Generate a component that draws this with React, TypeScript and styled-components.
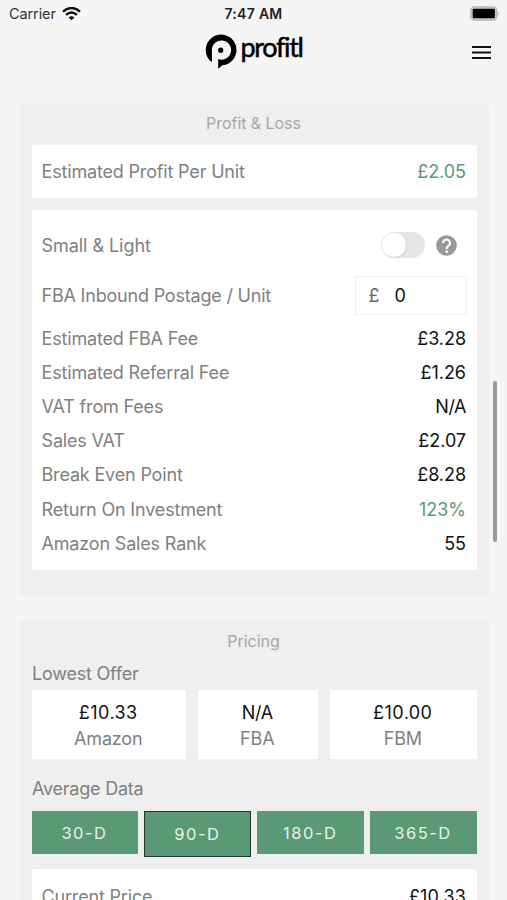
import React from 'react';
import styled, { createGlobalStyle } from 'styled-components';

const GlobalStyle = createGlobalStyle`
  *, *::before, *::after { box-sizing: border-box; }
  body {
    margin: 0;
    background: #f5f5f5;
    font-family: Inter, 'Liberation Sans', sans-serif;
  }
`;

const Screen = styled.div`
  position: relative;
  width: 507px;
  height: 900px;
  overflow: hidden;
  background: #f5f5f5;
`;

const StatusBar = styled.div`
  display: grid;
  grid-template-columns: 1fr auto 1fr;
  align-items: center;
  height: 27px;
  padding: 0 7px 0 9px;
`;

const Carrier = styled.div`
  display: flex;
  align-items: center;
  gap: 6px;
  font-size: 14.5px;
  letter-spacing: -0.1px;
  color: #333;
`;

const Clock = styled.div`
  margin-right: 2px;
  font-size: 14px;
  font-weight: 600;
  letter-spacing: 0.3px;
  color: #222;
`;

const BatterySlot = styled.div`
  display: flex;
  justify-content: flex-end;
`;

const Header = styled.header`
  display: grid;
  grid-template-columns: 1fr auto 1fr;
  height: 77px;
  padding: 0 16px 0 15px;
`;

const Brand = styled.div`
  grid-column: 2;
  display: flex;
  align-items: flex-start;
  gap: 4px;
  padding: 7px 0 0 1px;
`;

const Wordmark = styled.span`
  font-family: Lato, sans-serif;
  font-size: 27px;
  line-height: 32px;
  margin-top: -3px;
  letter-spacing: -1.35px;
  color: #000;
  -webkit-text-stroke: 0.5px #000;
  font-variant-ligatures: none;
`;

const MenuButton = styled.button`
  justify-self: end;
  align-self: start;
  display: flex;
  margin-top: 18px;
  padding: 0;
  border: 0;
  background: none;
`;

const Content = styled.main`
  display: flex;
  flex-direction: column;
  gap: 24px;
  padding: 0 18px 0 20px;
`;

const Panel = styled.section<{ $height: number }>`
  height: ${(p) => p.$height}px;
  padding: 0 12px;
  border-radius: 4px;
  background: #efefef;
`;

const PanelTitle = styled.h2<{ $height: number; $line: number }>`
  margin: 0;
  height: ${(p) => p.$height}px;
  line-height: ${(p) => p.$line}px;
  padding-right: 2px;
  text-align: center;
  font-size: 16px;
  font-weight: 400;
  letter-spacing: -0.05px;
  color: #a6a6a6;
`;

const Card = styled.div<{ $top?: number; $pad?: string }>`
  margin-top: ${(p) => p.$top ?? 0}px;
  padding: ${(p) => p.$pad ?? '0 11px 0 9.5px'};
  border-radius: 2px;
  background: #fff;
`;

const Row = styled.div<{ $height?: number }>`
  display: flex;
  align-items: center;
  justify-content: space-between;
  height: ${(p) => p.$height ?? 34.2}px;
`;

const Label = styled.span<{ $tracking?: number }>`
  font-size: 18px;
  letter-spacing: ${(p) => p.$tracking ?? -0.17}px;
  color: #808080;
`;

const Value = styled.span<{ $positive?: boolean; $tracking?: number }>`
  font-size: 18px;
  letter-spacing: ${(p) => p.$tracking ?? -0.05}px;
  color: ${(p) => (p.$positive ? '#5b9876' : '#111')};
`;

const Controls = styled.div`
  display: flex;
  align-items: center;
  gap: 11px;
  margin-right: 9.5px;
`;

const Toggle = styled.button`
  display: flex;
  align-items: center;
  width: 44px;
  height: 26px;
  padding: 1px;
  border: 0;
  border-radius: 13px;
  background: #e6e6e9;
`;

const Knob = styled.span`
  width: 24px;
  height: 24px;
  border-radius: 50%;
  background: #fff;
  box-shadow: 1px 1px 2px rgba(0, 0, 0, 0.07);
`;

const PostageField = styled.div`
  display: flex;
  align-items: center;
  gap: 15px;
  width: 112px;
  height: 39px;
  margin-right: -1px;
  padding-left: 12.5px;
  border: 1px solid #efefef;
  font-size: 18px;
  color: #111;
`;

const Currency = styled.span`
  color: #666;
`;

const SubHeading = styled.h3<{ $height: number }>`
  margin: 0;
  height: ${(p) => p.$height}px;
  line-height: 26px;
  font-size: 18px;
  font-weight: 400;
  letter-spacing: -0.22px;
  color: #808080;
`;

const Offers = styled.div`
  display: grid;
  grid-template-columns: 154px 120px 147px;
  gap: 12px;
  height: 69px;
  margin-bottom: 17px;
`;

const Offer = styled.div`
  display: flex;
  flex-direction: column;
  align-items: center;
  padding: 10px 1.5px 0 0;
  background: #fff;
  line-height: 26px;
`;

const Periods = styled.div`
  display: grid;
  grid-template-columns: repeat(4, 1fr);
  gap: 6px;
  align-items: start;
  height: 58px;
  margin-left: -0.5px;
`;

const Period = styled.button<{ $active?: boolean }>`
  height: ${(p) => (p.$active ? 46 : 43)}px;
  padding: 0 1px 0 0;
  border: ${(p) => (p.$active ? '1.5px solid #26332c' : '0')};
  background: #5b9876;
  color: #e4f5e9;
  font-family: inherit;
  font-size: 16.5px;
  letter-spacing: 1.5px;
`;

const ScrollThumb = styled.div`
  position: absolute;
  top: 381px;
  right: 10px;
  width: 4px;
  height: 161px;
  border-radius: 2px;
  background: #999;
`;

const WifiIcon = () => (
  <svg width="19" height="14" viewBox="0 0 19 14" fill="none" stroke="#111" strokeWidth="2.5">
    <path d="M1 4.6Q9.500 -2.500 18 4.600" />
    <path d="M4 7.900Q9.500 3.200 15 7.900" />
    <path d="M6.600 10.500Q9.500 8 12.400 10.500L9.500 13.300Z" fill="#111" stroke="none" />
  </svg>
);

const BatteryIcon = () => (
  <svg width="30" height="15" viewBox="0 0 30 15">
    <rect x="0.900" y="0.900" width="25.800" height="13.200" rx="3.500" fill="#ccc" stroke="#b5b5b5" strokeWidth="1.300" />
    <rect x="2.700" y="2.700" width="22.200" height="9.600" rx="1.200" fill="#000" />
    <path d="M27.600 5.100Q30 7.500 27.600 9.900Z" fill="#b5b5b5" />
  </svg>
);

const BrandMark = () => (
  <svg width="32" height="35" viewBox="0 0 32 35">
    <path
      d="M6.900 28.300A15.400 15.400 0 1 1 17.300 31.300L13.200 34.700V25.100A9.600 9.600 0 1 0 6.900 16Z"
      fill="#000"
    />
    <circle cx="15.700" cy="16.200" r="2.600" fill="#000" />
  </svg>
);

const MenuIcon = () => (
  <svg width="19" height="15" viewBox="0 0 19 15" stroke="#111" strokeWidth="2">
    <path d="M0 2H19M0 7.500H19M0 13H19" />
  </svg>
);

const HelpIcon = () => (
  <svg width="21" height="21" viewBox="0 0 24 24">
    <circle cx="12" cy="12" r="11.800" fill="#999" />
    <path
      d="M8 9.200a4 4 0 1 1 6.500 3.100c-1.500 1.200-2.300 1.700-2.300 3.600"
      fill="none"
      stroke="#fff"
      strokeWidth="2.500"
    />
    <circle cx="12.200" cy="19" r="1.500" fill="#fff" />
  </svg>
);

const feeRows = [
  { label: 'Estimated FBA Fee', value: '£3.28' },
  { label: 'Estimated Referral Fee', value: '£1.26' },
  { label: 'VAT from Fees', value: 'N/A', tracking: -0.45 },
  { label: 'Sales VAT', value: '£2.07' },
  { label: 'Break Even Point', value: '£8.28' },
  { label: 'Return On Investment', value: '123%', positive: true },
  { label: 'Amazon Sales Rank', value: '55' },
];

const offers = [
  { seller: 'Amazon', price: '£10.33', tracking: 0.45 },
  { seller: 'FBA', price: 'N/A', tracking: -0.3 },
  { seller: 'FBM', price: '£10.00', tracking: 0.45 },
];

const periods = ['30-D', '90-D', '180-D', '365-D'];

export default function App() {
  return (
    <Screen>
      <GlobalStyle />
      <StatusBar>
        <Carrier>
          Carrier
          <WifiIcon />
        </Carrier>
        <Clock>7:47 AM</Clock>
        <BatterySlot>
          <BatteryIcon />
        </BatterySlot>
      </StatusBar>
      <Header>
        <Brand>
          <BrandMark />
          <Wordmark>profitl</Wordmark>
        </Brand>
        <MenuButton aria-label="Menu">
          <MenuIcon />
        </MenuButton>
      </Header>
      <Content>
        <Panel $height={491}>
          <PanelTitle $height={41} $line={39}>
            Profit &amp; Loss
          </PanelTitle>
          <Card>
            <Row $height={53}>
              <Label>Estimated Profit Per Unit</Label>
              <Value $positive>£2.05</Value>
            </Row>
          </Card>
          <Card $top={12} $pad="10px 11px 9.600px 9.5px">
            <Row $height={50}>
              <Label $tracking={-0.05}>Small &amp; Light</Label>
              <Controls>
                <Toggle role="switch" aria-checked="false" aria-label="Small and light">
                  <Knob />
                </Toggle>
                <HelpIcon />
              </Controls>
            </Row>
            <Row $height={51}>
              <Label $tracking={-0.2}>FBA Inbound Postage / Unit</Label>
              <PostageField>
                <Currency>£</Currency>0
              </PostageField>
            </Row>
            {feeRows.map((row) => (
              <Row key={row.label}>
                <Label>{row.label}</Label>
                <Value $positive={row.positive} $tracking={row.tracking}>
                  {row.value}
                </Value>
              </Row>
            ))}
          </Card>
        </Panel>
        <Panel $height={400}>
          <PanelTitle $height={42} $line={44}>
            Pricing
          </PanelTitle>
          <SubHeading $height={29}>Lowest Offer</SubHeading>
          <Offers>
            {offers.map((offer) => (
              <Offer key={offer.seller}>
                <Value $tracking={offer.tracking}>{offer.price}</Value>
                <Label>{offer.seller}</Label>
              </Offer>
            ))}
          </Offers>
          <SubHeading $height={35}>Average Data</SubHeading>
          <Periods>
            {periods.map((period) => (
              <Period key={period} $active={period === '90-D'}>
                {period}
              </Period>
            ))}
          </Periods>
          <Card>
            <Row $height={54}>
              <Label>Current Price</Label>
              <Value $tracking={0.15}>£10.33</Value>
            </Row>
          </Card>
        </Panel>
      </Content>
      <ScrollThumb />
    </Screen>
  );
}
